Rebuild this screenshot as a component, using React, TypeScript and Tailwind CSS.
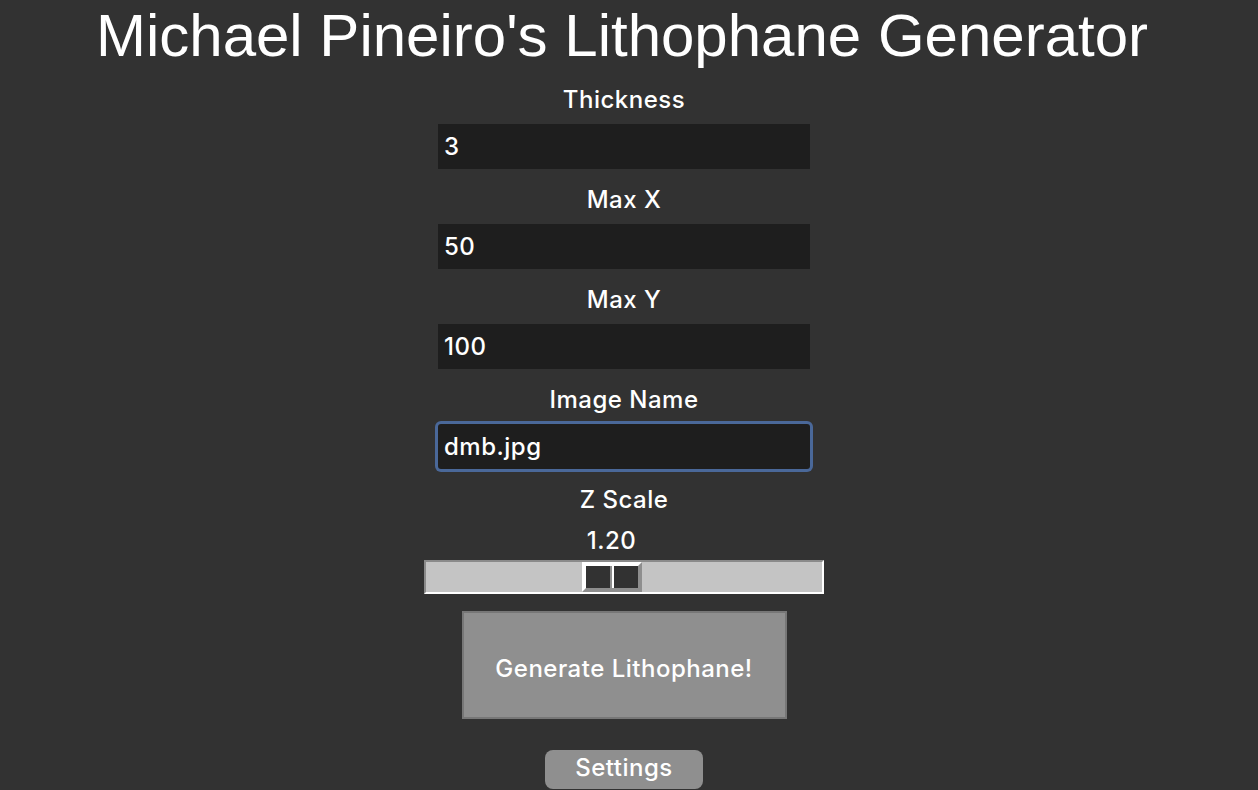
import * as React from "react"

const fields = [
  { label: "Thickness", value: "3" },
  { label: "Max X", value: "50" },
  { label: "Max Y", value: "100" },
  { label: "Image Name", value: "dmb.jpg", focused: true },
]

function Field({ label, value, focused }: { label: string; value: string; focused?: boolean }) {
  return (
    <div className="flex flex-col items-center">
      <div className="h-[30px] pt-[2px] text-[24px] leading-[30px] text-white">{label}</div>
      <div
        className={
          focused
            ? "mt-[11px] h-[45px] w-[372px] rounded-[3px] bg-[#1e1e1e] pl-[6px] text-[24px] leading-[45px] text-white ring-[3px] ring-[#4a6899]"
            : "mt-[11px] h-[45px] w-[372px] bg-[#1e1e1e] pl-[6px] text-[24px] leading-[45px] text-white"
        }
      >
        {value}
      </div>
    </div>
  )
}

export default function App() {
  return (
    <div className="h-[790px] w-full overflow-hidden bg-[#323232] font-['Inter',sans-serif] font-medium tracking-[0.5px]">
      <div className="flex w-[1248px] flex-col items-center">
        <h1 className="mr-[4px] h-[72px] font-['Liberation_Sans',Arial,sans-serif] text-[60px] font-normal leading-[72px] tracking-normal text-white">
          Michael Pineiro's Lithophane Generator
        </h1>

        {/* Number + text inputs */}
        <div className="mt-[11px] flex flex-col gap-[14px]">
          {fields.map(f => (
            <Field key={f.label} label={f.label} value={f.value} focused={f.focused} />
          ))}
        </div>

        {/* Z scale slider */}
        <div className="mt-[14px] h-[30px] pt-[2px] text-[24px] leading-[30px] text-white">Z Scale</div>
        <div className="mt-[13px] mr-[25px] h-[30px] text-[24px] leading-[30px] text-white">1.20</div>
        <div className="mt-[4px] flex h-[34px] w-[400px] border-t-2 border-l-2 border-r-2 border-b-2 border-t-[#8a8a8a] border-l-[#8a8a8a] border-r-white border-b-white bg-[#c4c4c4]">
          <div className="ml-[156px] flex h-[30px] w-[60px] border-t-4 border-l-4 border-r-4 border-b-4 border-t-white border-l-white border-r-[#8e8e8e] border-b-[#8e8e8e] bg-[#323232]">
            <div className="w-[24px]" />
            <div className="w-[2px] bg-[#8e8e8e]" />
            <div className="w-[2px] bg-white" />
          </div>
        </div>

        <button className="mt-[17px] flex h-[108px] w-[325px] items-center justify-center border-2 border-[#777777] bg-[#8f8f8f] pt-[8px] text-[24px] leading-[30px] text-white">
          Generate Lithophane!
        </button>

        <button className="mt-[31px] h-[39px] w-[158px] rounded-[8px] bg-[#8f8f8f] pb-[4px] text-[24px] leading-[30px] text-white">
          Settings
        </button>
      </div>
    </div>
  )
}
